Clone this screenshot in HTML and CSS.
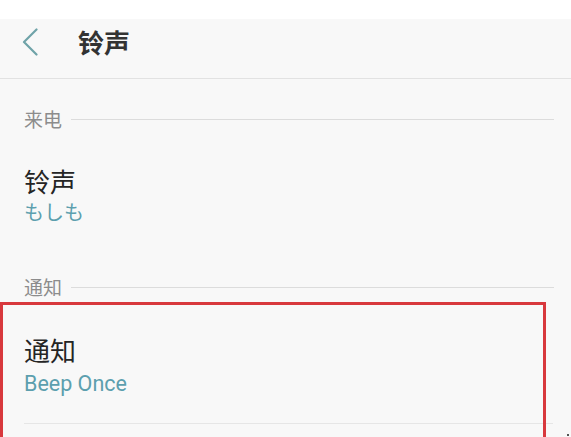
FILE: index.html
```html
<!DOCTYPE html>
<html lang="zh">
<head>
<meta charset="utf-8">
<title>铃声</title>
<link rel="stylesheet" href="styles.css">
</head>
<body>
<div class="screen">
  <div class="topstrip"></div>
  <header class="header">
    <svg class="back" width="18" height="28" viewBox="0 0 18 28" aria-hidden="true">
      <path d="M15.5 1.5 L3 14 L15.5 26.5" fill="none" stroke="#6fa3a8" stroke-width="2.2" stroke-linecap="round" stroke-linejoin="round"/>
    </svg>
    <h1 class="title">铃声</h1>
  </header>
  <div class="section-label first"><span>来电</span><i class="rule"></i></div>
  <div class="item">
    <div class="item-title">铃声</div>
    <div class="item-sub">もしも</div>
  </div>
  <div class="section-label second"><span>通知</span><i class="rule"></i></div>
  <div class="item item-2">
    <div class="item-title">通知</div>
    <div class="item-sub latin">Beep Once</div>
  </div>
  <div class="divider"></div>
  <div class="highlight"></div>
  <div class="dot"></div>
</div>
</body>
</html>
```

FILE: styles.css
```css
html, body {
  margin: 0;
  padding: 0;
  background: #f8f8f8;
}
.screen {
  position: relative;
  width: 571px;
  height: 437px;
  overflow: hidden;
  background: #f8f8f8;
  font-family: "Noto Sans CJK SC", "Noto Sans", sans-serif;
}
.topstrip {
  height: 19px;
  background: #ffffff;
}
.header {
  height: 60px;
  box-sizing: border-box;
  display: flex;
  align-items: flex-start;
  padding-left: 21px;
  padding-top: 8px;
  border-bottom: 1px solid #e2e2e2;
  background: #f8f8f8;
}
.back {
  display: block;
  margin-top: 1px;
}
.title {
  margin: 0 0 0 39px;
  font-size: 26px;
  font-weight: 700;
  color: #333333;
  line-height: 30px;
}
.section-label {
  display: flex;
  align-items: center;
  height: 22px;
  padding-left: 24px;
  padding-right: 17px;
  font-size: 19px;
  color: #8c8c8c;
  line-height: 22px;
}
.section-label.first {
  margin-top: 29px;
}
.section-label.second {
  margin-top: 50px;
}
.rule {
  flex: 1;
  height: 1px;
  background: #dcdcdc;
  margin-left: 9px;
}
.item {
  padding-left: 24px;
  padding-top: 34px;
}
.item-2 {
  padding-top: 35px;
}
.item-title {
  font-size: 26px;
  line-height: 34px;
  color: #252525;
}
.item-sub {
  font-size: 20px;
  line-height: 28px;
  color: #5c9fae;
}
.item-sub.latin {
  font-family: Roboto, "Noto Sans", sans-serif;
  font-size: 21.5px;
  margin-top: 3px;
}
.divider {
  height: 1px;
  background: #e6e6e6;
  margin: 25px 18px 0 24px;
}
.highlight {
  position: absolute;
  left: 0;
  top: 302px;
  width: 540px;
  height: 160px;
  border: 3px solid #d8383d;
}
.dot {
  position: absolute;
  left: 567px;
  top: 434px;
  width: 2px;
  height: 2px;
  background: #555;
}
```
